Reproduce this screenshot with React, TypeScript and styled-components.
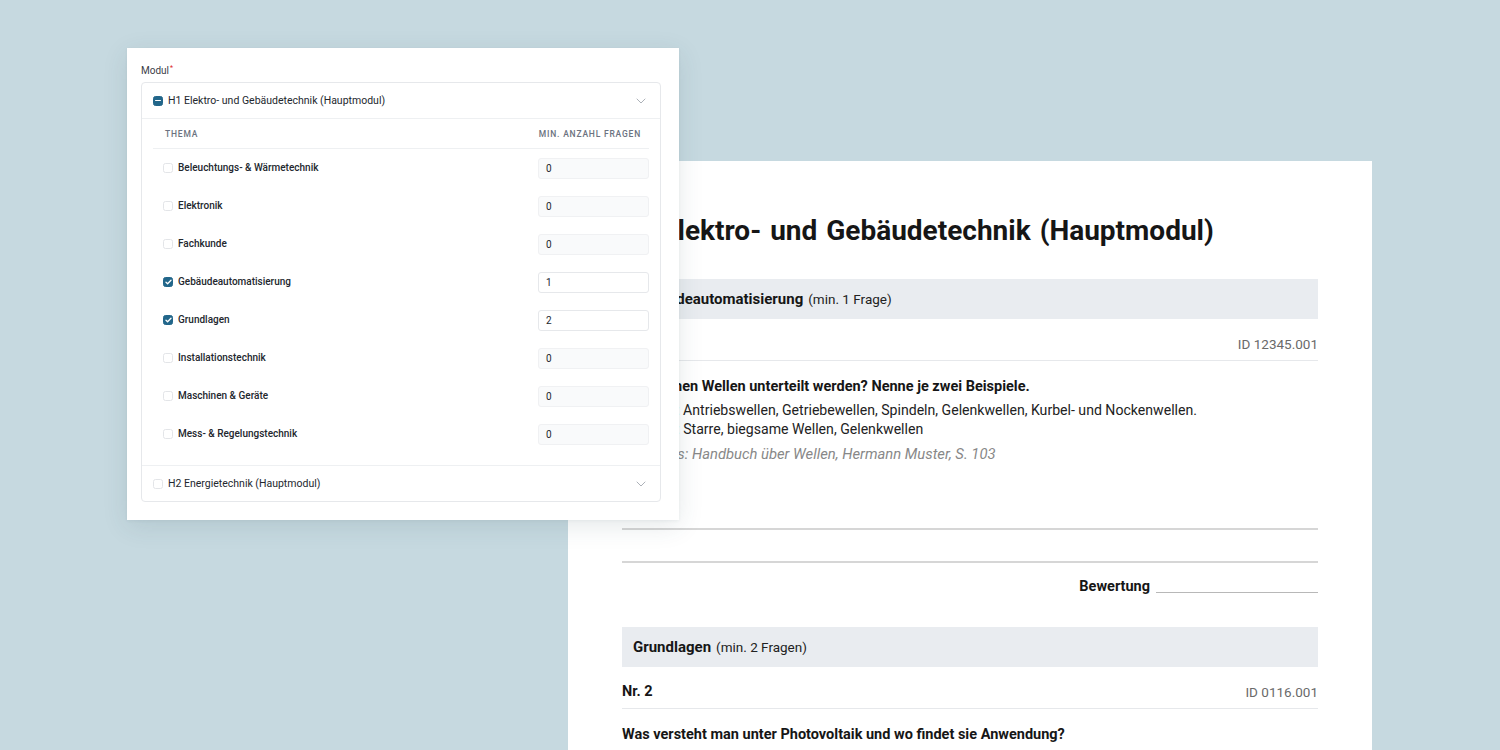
import { createGlobalStyle, styled } from "styled-components";

const GlobalStyle = createGlobalStyle`
  html, body {
    margin: 0;
    padding: 0;
  }
  body {
    background: #c6d9e0;
    font-family: Roboto, "Liberation Sans", sans-serif;
  }
`;

const Desk = styled.div`
  position: relative;
  width: 1500px;
  height: 750px;
  overflow: hidden;
  background: #c6d9e0;
`;

/* ---------- document (back) ---------- */

const Sheet = styled.div`
  position: absolute;
  left: 568px;
  top: 161px;
  width: 804px;
  height: 700px;
  background: #ffffff;
  box-sizing: border-box;
  padding: 54px 54px 0;
  font-family: Roboto, "Liberation Sans", sans-serif;
  color: #1a1a1a;
`;

const SheetTitle = styled.h1`
  margin: 0 0 32px;
  font-size: 28px;
  line-height: 32px;
  font-weight: 700;
  word-spacing: 2px;
  text-indent: -5px;
  color: #161616;
`;

const SectionBar = styled.div`
  height: 40px;
  display: flex;
  align-items: center;
  gap: 5px;
  padding: 0 11px;
  background: #e9ecf0;
  font-size: 15px;
  font-weight: 700;
  color: #161616;
`;

const SectionHint = styled.span`
  font-size: 13.5px;
  font-weight: 400;
  color: #222;
`;

const ItemHead = styled.div`
  display: flex;
  justify-content: space-between;
  align-items: center;
  padding: 17px 0 8px;
  border-bottom: 1px solid #e6e8eb;
  font-size: 14.5px;
  line-height: 16px;
`;

const ItemNr = styled.span`
  font-weight: 700;
  color: #161616;
`;

const ItemId = styled.span`
  font-size: 13.5px;
  color: #6a6a6a;
`;

const Question = styled.p`
  margin: 18px 0 0;
  font-size: 14.5px;
  line-height: 16px;
  font-weight: 700;
  color: #161616;
`;

const Answers = styled.div`
  margin-top: 6px;
  font-size: 14.1px;
  line-height: 19px;
  color: #222;
`;

const Note = styled.p`
  margin: 6px 0 0;
  font-size: 14.8px;
  line-height: 19px;
  font-style: italic;
  color: #888;
`;

const WriteLines = styled.div`
  margin-top: 64px;
  display: flex;
  flex-direction: column;
  gap: 31px;
`;

const WriteLine = styled.div`
  height: 2px;
  background: #d6d6d6;
`;

const Rating = styled.div`
  margin-top: 15px;
  display: flex;
  justify-content: flex-end;
  align-items: flex-end;
  gap: 6px;
  font-size: 14.5px;
  font-weight: 700;
  color: #161616;
`;

const RatingLine = styled.div`
  width: 162px;
  height: 1px;
  margin-bottom: 2px;
  background: #b8b8b8;
`;

const Spacer = styled.div<{ $h: number }>`
  height: ${(p) => p.$h}px;
`;

/* ---------- form card (front) ---------- */

const Card = styled.div`
  position: absolute;
  left: 127px;
  top: 48px;
  width: 552px;
  box-sizing: border-box;
  padding: 17px 18px 18px 14px;
  background: #ffffff;
  box-shadow: 0 6px 24px rgba(40, 70, 85, 0.12), 0 1px 3px rgba(40, 70, 85, 0.06);
  color: #1f2328;
`;

const FieldLabel = styled.div`
  height: 12px;
  font-size: 10px;
  line-height: 12px;
  color: #3b4048;
  margin-bottom: 5px;
`;

const Required = styled.span`
  position: relative;
  top: -4px;
  margin-left: 1px;
  color: #dc2626;
  font-size: 7px;
  line-height: 0;
`;

const Accordion = styled.div`
  border: 1px solid #e6e8eb;
  border-radius: 4px;
`;

const ModuleHead = styled.div<{ $open?: boolean }>`
  height: 35px;
  display: flex;
  align-items: center;
  gap: 5px;
  padding: 0 14px 0 11px;
  font-size: 10.5px;
  color: #23272e;
  border-bottom: ${(p) => (p.$open ? "1px solid #eef0f2" : "none")};
`;

const ModuleName = styled.span`
  flex: 1;
`;

const Box = styled.span<{ $on?: boolean }>`
  width: 10px;
  height: 10px;
  box-sizing: border-box;
  border-radius: 2.5px;
  border: 1px solid ${(p) => (p.$on ? "#22668a" : "#e3e5e8")};
  background: ${(p) => (p.$on ? "#22668a" : "#fff")};
  display: inline-flex;
  align-items: center;
  justify-content: center;
  flex-shrink: 0;
`;

const Dash = styled.span`
  width: 6px;
  height: 1.5px;
  background: #fff;
  border-radius: 1px;
`;

const Topics = styled.div`
  padding: 0 11px 12px;
  border-bottom: 1px solid #eef0f2;
`;

const TopicsHead = styled.div`
  height: 29px;
  display: grid;
  grid-template-columns: 1fr auto;
  align-items: center;
  padding: 0 8px 0 12px;
  border-bottom: 1px solid #eef0f2;
  font-size: 8.5px;
  font-weight: 500;
  letter-spacing: 0.8px;
  text-transform: uppercase;
  color: #6b7280;
`;

const TopicRow = styled.div`
  display: grid;
  grid-template-columns: 1fr 111px;
  align-items: center;
  padding: 9px 0 8px;
`;

const TopicLabel = styled.label`
  display: flex;
  align-items: center;
  gap: 5px;
  padding-left: 10px;
  font-size: 10px;
  font-weight: 500;
  color: #23272e;
  margin-top: -2px;
`;

const Count = styled.div<{ $active?: boolean }>`
  height: 21px;
  box-sizing: border-box;
  display: flex;
  align-items: center;
  padding-left: 7px;
  border-radius: 3px;
  border: 1px solid ${(p) => (p.$active ? "#e6e8eb" : "#f0f1f3")};
  background: ${(p) => (p.$active ? "#ffffff" : "#f9fafb")};
  font-size: 10px;
  color: #23272e;
`;

const Chevron = () => (
  <svg width="10" height="6" viewBox="0 0 10 6" fill="none">
    <path d="M1 1l4 4 4-4" stroke="#a3a8b0" strokeWidth="0.9" strokeLinecap="round" strokeLinejoin="round" />
  </svg>
);

const Check = () => (
  <svg width="7" height="6" viewBox="0 0 7 6" fill="none">
    <path d="M1 3.2l1.6 1.5L6 1.2" stroke="#fff" strokeWidth="1.3" strokeLinecap="round" strokeLinejoin="round" />
  </svg>
);

const topics = [
  { name: "Beleuchtungs- & Wärmetechnik", count: 0 },
  { name: "Elektronik", count: 0 },
  { name: "Fachkunde", count: 0 },
  { name: "Gebäudeautomatisierung", count: 1 },
  { name: "Grundlagen", count: 2 },
  { name: "Installationstechnik", count: 0 },
  { name: "Maschinen & Geräte", count: 0 },
  { name: "Mess- & Regelungstechnik", count: 0 },
];

export default function App() {
  return (
    <Desk>
      <GlobalStyle />

      <Sheet>
        <SheetTitle>H1 Elektro- und Gebäudetechnik (Hauptmodul)</SheetTitle>

        <SectionBar>
          Gebäudeautomatisierung <SectionHint>(min. 1 Frage)</SectionHint>
        </SectionBar>
        <ItemHead>
          <ItemNr>Nr. 1</ItemNr>
          <ItemId>ID 12345.001</ItemId>
        </ItemHead>
        <Question>Wie können Wellen unterteilt werden? Nenne je zwei Beispiele.</Question>
        <Answers>
          <div>Funktion: Antriebswellen, Getriebewellen, Spindeln, Gelenkwellen, Kurbel- und Nockenwellen.</div>
          <div>Bauform: Starre, biegsame Wellen, Gelenkwellen</div>
        </Answers>
        <Note>Nachweis: Handbuch über Wellen, Hermann Muster, S. 103</Note>
        <WriteLines>
          <WriteLine />
          <WriteLine />
        </WriteLines>
        <Rating>
          Bewertung <RatingLine />
        </Rating>

        <Spacer $h={32} />
        <SectionBar>
          Grundlagen <SectionHint>(min. 2 Fragen)</SectionHint>
        </SectionBar>
        <ItemHead>
          <ItemNr>Nr. 2</ItemNr>
          <ItemId>ID 0116.001</ItemId>
        </ItemHead>
        <Question>Was versteht man unter Photovoltaik und wo findet sie Anwendung?</Question>
      </Sheet>

      <Card>
        <FieldLabel>
          Modul<Required>*</Required>
        </FieldLabel>
        <Accordion>
          <ModuleHead $open>
            <Box $on>
              <Dash />
            </Box>
            <ModuleName>H1 Elektro- und Gebäudetechnik (Hauptmodul)</ModuleName>
            <Chevron />
          </ModuleHead>
          <Topics>
            <TopicsHead>
              <span>Thema</span>
              <span>Min. Anzahl Fragen</span>
            </TopicsHead>
            {topics.map((t) => (
              <TopicRow key={t.name}>
                <TopicLabel>
                  <Box $on={t.count > 0}>{t.count > 0 && <Check />}</Box>
                  {t.name}
                </TopicLabel>
                <Count $active={t.count > 0}>{t.count}</Count>
              </TopicRow>
            ))}
          </Topics>
          <ModuleHead>
            <Box />
            <ModuleName>H2 Energietechnik (Hauptmodul)</ModuleName>
            <Chevron />
          </ModuleHead>
        </Accordion>
      </Card>
    </Desk>
  );
}
